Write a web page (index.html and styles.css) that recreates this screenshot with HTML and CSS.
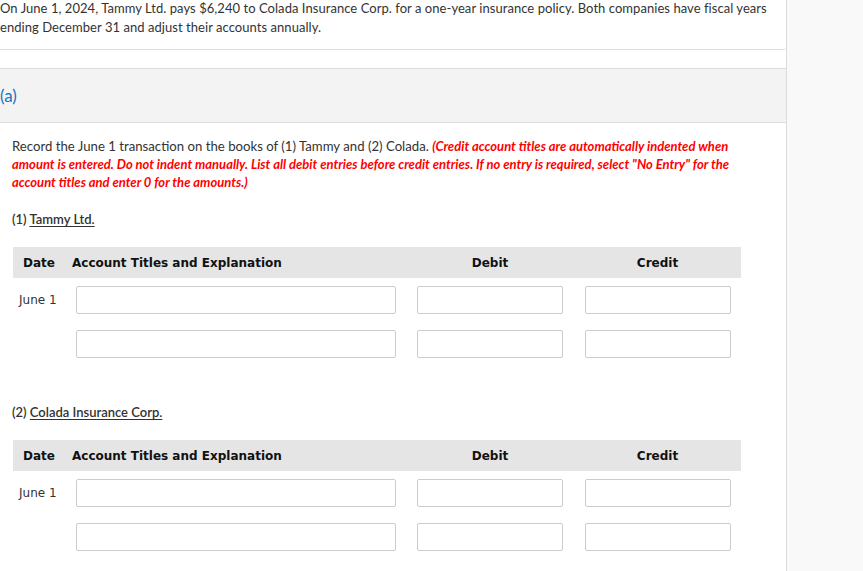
FILE: index.html
```html
<!DOCTYPE html>
<html>
<head>
<meta charset="utf-8">
<link rel="stylesheet" href="styles.css">
</head>
<body>
<div class="page">
  <main class="main">
    <div class="intro">
      <p>On June 1, 2024, Tammy Ltd. pays $6,240 to Colada Insurance Corp. for a one-year insurance policy. Both companies have fiscal years ending December 31 and adjust their accounts annually.</p>
    </div>
    <section class="part">
      <div class="part-head"><span class="part-label">(a)</span></div>
      <div class="part-body">
        <p class="instr">Record the June 1 transaction on the books of (1) Tammy and (2) Colada. <em class="warn">(Credit account titles are automatically indented when amount is entered. Do not indent manually. List all debit entries before credit entries. If no entry is required, select "No Entry" for the account titles and enter 0 for the amounts.)</em></p>

        <p class="company">(1) <u>Tammy Ltd.</u></p>
        <div class="journal">
          <div class="jhead">
            <div class="c-date">Date</div>
            <div class="c-acct">Account Titles and Explanation</div>
            <div class="c-num">Debit</div>
            <div class="c-num">Credit</div>
          </div>
          <div class="jrow">
            <div class="c-date">June 1</div>
            <div class="c-acct"><input class="in in-acct" type="text"></div>
            <div class="c-num"><input class="in in-num" type="text"></div>
            <div class="c-num"><input class="in in-num" type="text"></div>
          </div>
          <div class="jrow">
            <div class="c-date"></div>
            <div class="c-acct"><input class="in in-acct" type="text"></div>
            <div class="c-num"><input class="in in-num" type="text"></div>
            <div class="c-num"><input class="in in-num" type="text"></div>
          </div>
        </div>

        <p class="company company-2">(2) <u>Colada Insurance Corp.</u></p>
        <div class="journal">
          <div class="jhead">
            <div class="c-date">Date</div>
            <div class="c-acct">Account Titles and Explanation</div>
            <div class="c-num">Debit</div>
            <div class="c-num">Credit</div>
          </div>
          <div class="jrow">
            <div class="c-date">June 1</div>
            <div class="c-acct"><input class="in in-acct" type="text"></div>
            <div class="c-num"><input class="in in-num" type="text"></div>
            <div class="c-num"><input class="in in-num" type="text"></div>
          </div>
          <div class="jrow">
            <div class="c-date"></div>
            <div class="c-acct"><input class="in in-acct" type="text"></div>
            <div class="c-num"><input class="in in-num" type="text"></div>
            <div class="c-num"><input class="in in-num" type="text"></div>
          </div>
        </div>
      </div>
    </section>
  </main>
  <aside class="side"></aside>
</div>
</body>
</html>
```
FILE: styles.css
```css
html, body {
  margin: 0;
  padding: 0;
  height: 100%;
  overflow: hidden;
}
body {
  background: #f9f9f9;
  font-family: Lato, "Open Sans", sans-serif;
  color: #333;
}
.page {
  display: flex;
  min-height: 100%;
}
.main {
  width: 786px;
  flex: none;
  background: #fff;
  border-right: 1px solid #dcdcdc;
  display: flex;
  flex-direction: column;
}
.side {
  flex: 1;
  background: #f9f9f9;
}
.intro {
  border-bottom: 1px solid #dcdcdc;
  border-bottom-right-radius: 3px;
  padding: 0 0 12px 0;
  margin-top: -2px;
}
.intro p {
  margin: 0;
  font-size: 13px;
  line-height: 19px;
  padding-top: 1px;
  letter-spacing: 0.05px;
}
.part {
  margin-top: 18px;
  border-top: 1px solid #dcdcdc;
  flex: 1;
}
.part-head {
  background: #f3f3f3;
  height: 53px;
  border-bottom: 1px solid #dcdcdc;
  display: flex;
  align-items: center;
}
.part-label {
  color: #1c75bc;
  font-size: 17px;
}
.part-body {
  padding: 14px 0 0 12px;
}
.instr {
  margin: 0;
  font-size: 13.2px;
  line-height: 18px;
  width: 720px;
}
.warn {
  color: #ff0000;
  font-weight: 700;
  font-style: italic;
  font-size: 13px;
}
.company {
  margin: 19px 0 19px 0;
  font-size: 13px;
  line-height: 18px;
  font-weight: 600;
}
.company u {
  text-decoration-thickness: 1px;
  text-underline-offset: 2px;
}
.company-2 {
  margin-top: 45px;
}
.journal {
  margin-left: 1px;
  width: 728px;
}
.jhead, .jrow {
  display: grid;
  grid-template-columns: 59px 334px 168px 167px;
  align-items: center;
}
.jhead {
  background: #e5e5e5;
  height: 31px;
  font-family: Verdana, "DejaVu Sans", sans-serif;
  font-weight: 700;
  font-size: 12px;
  color: #111;
  margin-bottom: 8px;
}
.jhead .c-date {
  padding-left: 10px;
}
.jhead .c-num {
  text-align: center;
}
.jrow {
  height: 28px;
  margin-bottom: 16px;
}
.jrow .c-date {
  padding-left: 6px;
  font-family: Verdana, "DejaVu Sans", sans-serif;
  font-size: 12px;
  color: #333;
}
.jrow .c-acct {
  padding-left: 4px;
}
.jrow .c-num {
  display: flex;
  justify-content: center;
}
.in {
  box-sizing: border-box;
  height: 28px;
  border: 1px solid #cccccc;
  border-radius: 2px;
  background: #fff;
  margin: 0;
  padding: 0 6px;
  display: block;
}
.in-acct {
  width: 320px;
}
.in-num {
  width: 146px;
}
```
